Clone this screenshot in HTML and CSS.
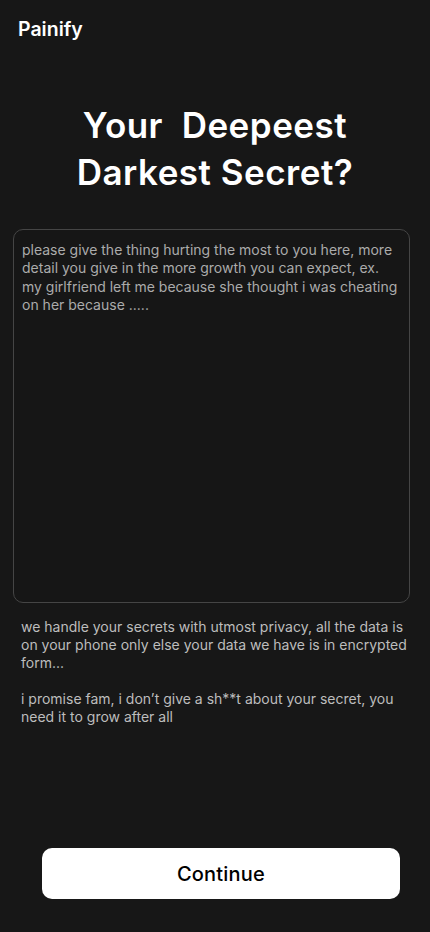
FILE: index.html
```html
<!DOCTYPE html>
<html>
<head>
<meta charset="utf-8">
<link rel="stylesheet" href="styles.css">
</head>
<body>
<div class="screen">
  <header class="brand">Painify</header>
  <h1 class="title">Your&nbsp; Deepeest<br>Darkest Secret?</h1>
  <textarea class="secret" placeholder="please give the thing hurting the most to you here, more detail you give in the more growth you can expect, ex. my girlfriend left me because she thought i was cheating on her because ....."></textarea>
  <div class="notes">
    <p>we handle your secrets with utmost privacy, all the data is on your phone only else your data we have is in encrypted form...</p>
    <p>i promise fam, i don’t give a sh**t about your secret, you need it to grow after all</p>
  </div>
  <div class="spacer"></div>
  <button class="continue">Continue</button>
</div>
</body>
</html>
```
FILE: styles.css
```css
* { box-sizing: border-box; }
html, body { margin: 0; padding: 0; background: #171717; }
body { font-family: Inter, "Noto Sans", sans-serif; }
.screen {
  width: 430px;
  height: 932px;
  display: flex;
  flex-direction: column;
  padding: 0 0 33px;
}
.brand {
  color: #fff;
  font-size: 19.5px;
  font-weight: 600;
  padding: 17px 0 0 18px;
  line-height: 24px;
  letter-spacing: 0;
}
.title {
  margin: 61px 0 0;
  color: #fff;
  font-size: 35px;
  font-weight: 600;
  line-height: 47px;
  text-align: center;
  letter-spacing: 0.5px;
}
.secret {
  margin: 33px 20px 0 13px;
  height: 374px;
  background: #161616;
  border: 1px solid #454545;
  border-radius: 10px;
  padding: 11px 8px;
  resize: none;
  outline: none;
  font-family: inherit;
  font-size: 14px;
  line-height: 18.3px;
  color: #eee;
  letter-spacing: 0;
}
.secret::placeholder { color: #ababab; }
.notes {
  padding: 15px 20px 0 21px;
  color: #bdbdbd;
  font-size: 14px;
  line-height: 18px;
  letter-spacing: 0;
}
.notes p { margin: 0 0 18px; }
.spacer { flex: 1; }
.continue {
  align-self: center;
  width: 358px;
  height: 51px;
  margin-left: 12px;
  background: #fff;
  border: none;
  border-radius: 10px;
  color: #000;
  font-family: inherit;
  font-size: 20px;
  font-weight: 500;
  letter-spacing: 0.2px;
}
```
